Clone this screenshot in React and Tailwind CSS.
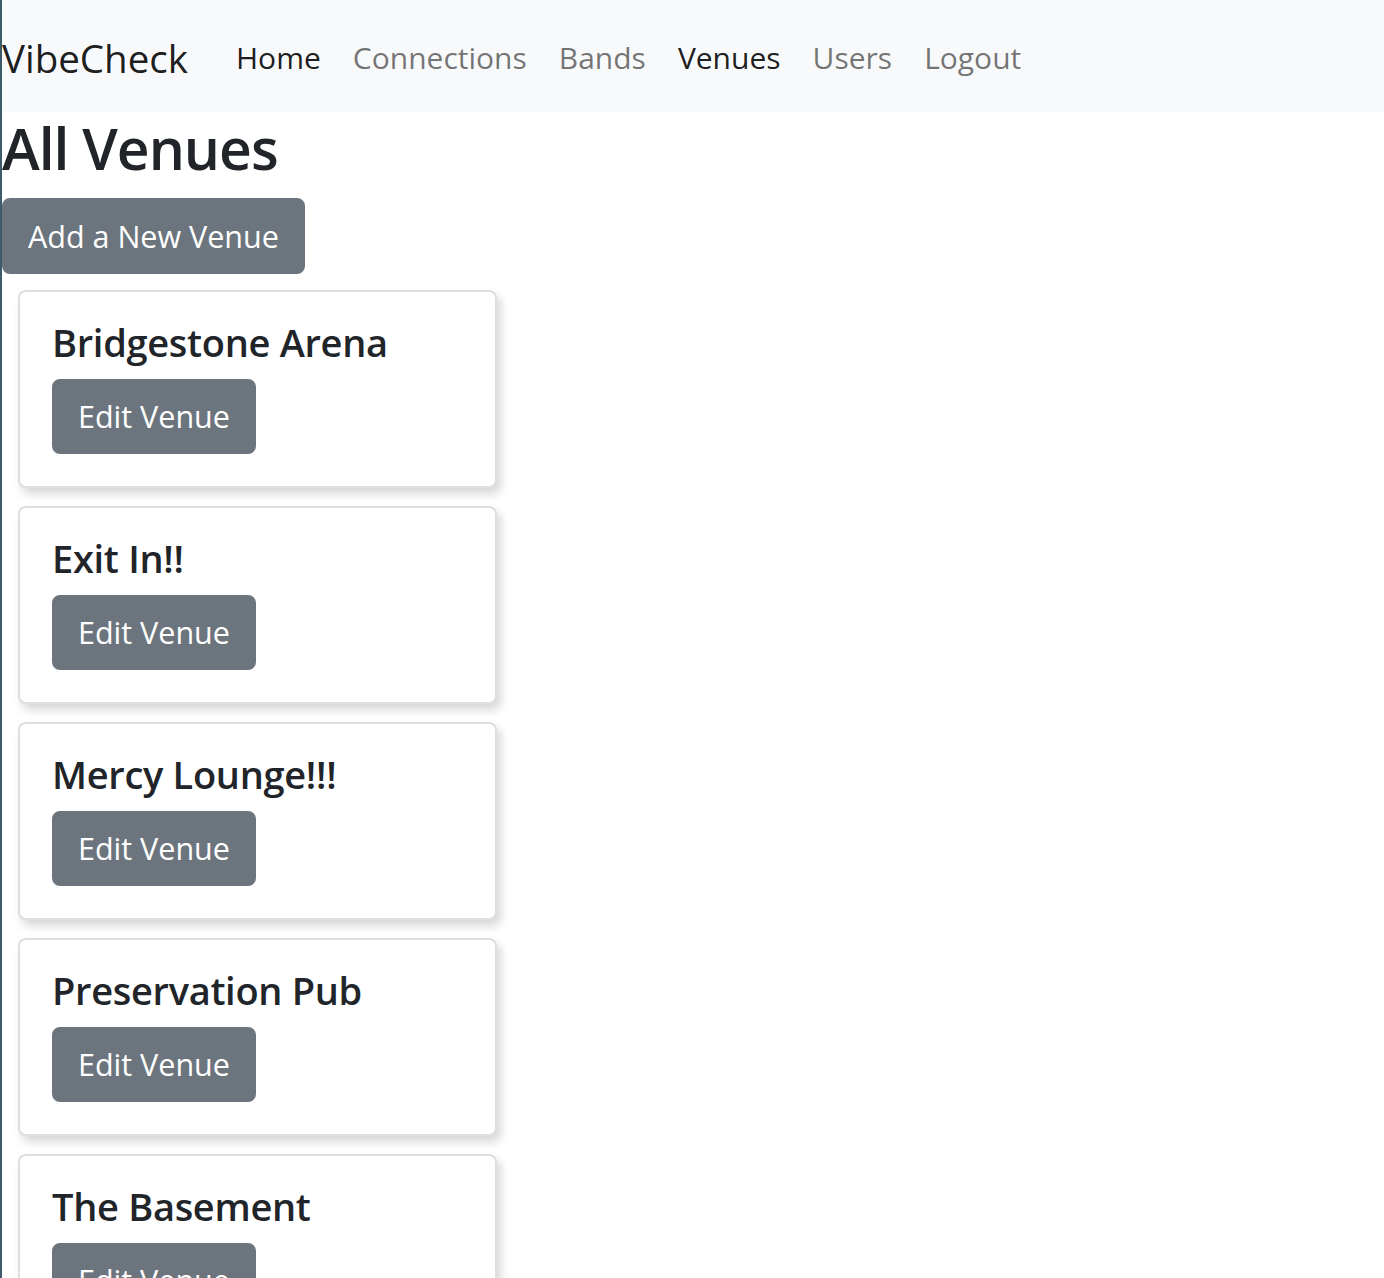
import React from 'react';

const venues = ['Bridgestone Arena', 'Exit In!!', 'Mercy Lounge!!!', 'Preservation Pub', 'The Basement'];

const links = [
  { label: 'Home', active: true },
  { label: 'Connections' },
  { label: 'Bands' },
  { label: 'Venues', active: true },
  { label: 'Users' },
  { label: 'Logout' },
];

const VenueCard = ({ name }) => (
  <div className="bg-white border-2 border-[rgba(0,0,0,0.125)] rounded-[8px] shadow-[4px_6px_10px_rgba(0,0,0,0.16)] p-[32px] w-[479px]">
    <h5 className="text-[38px] leading-[36px] tracking-[-0.3px] font-semibold mb-[19px]">{name}</h5>
    <button className="bg-[#6c757d] text-white border-2 border-[#6c757d] rounded-[8px] text-[30.5px] leading-[47px] px-[24px] py-[12px]">
      Edit Venue
    </button>
  </div>
);

export default function App() {
  return (
    <div
      className="h-[1278px] overflow-hidden bg-white text-[#212529] border-l-2 border-[#3e5b6b]"
      style={{ fontFamily: '"Open Sans", "Noto Sans", sans-serif' }}
    >
      <nav className="bg-[#f8f9fa] h-[112px] flex items-center pt-[4px]">
        <a className="text-[38.5px] leading-[60px] text-black/90 mr-[32px]">VibeCheck</a>
        <ul className="flex">
          {links.map((l) => (
            <li key={l.label}>
              <a className={`block px-[16px] text-[30px] leading-[48px] ${l.active ? 'text-black/90' : 'text-black/55'}`}>
                {l.label}
              </a>
            </li>
          ))}
        </ul>
      </nav>
      <h1 className="text-[57px] leading-[72px] tracking-[-1px] font-semibold mb-[14px]">All Venues</h1>
      <button className="bg-[#6c757d] text-white border-2 border-[#6c757d] rounded-[8px] text-[30.5px] leading-[48px] px-[24px] py-[12px]">
        Add a New Venue
      </button>
      <div className="flex flex-col gap-[18px] pl-[16px] pt-[16px]">
        {venues.map((v) => (
          <VenueCard key={v} name={v} />
        ))}
      </div>
    </div>
  );
}
